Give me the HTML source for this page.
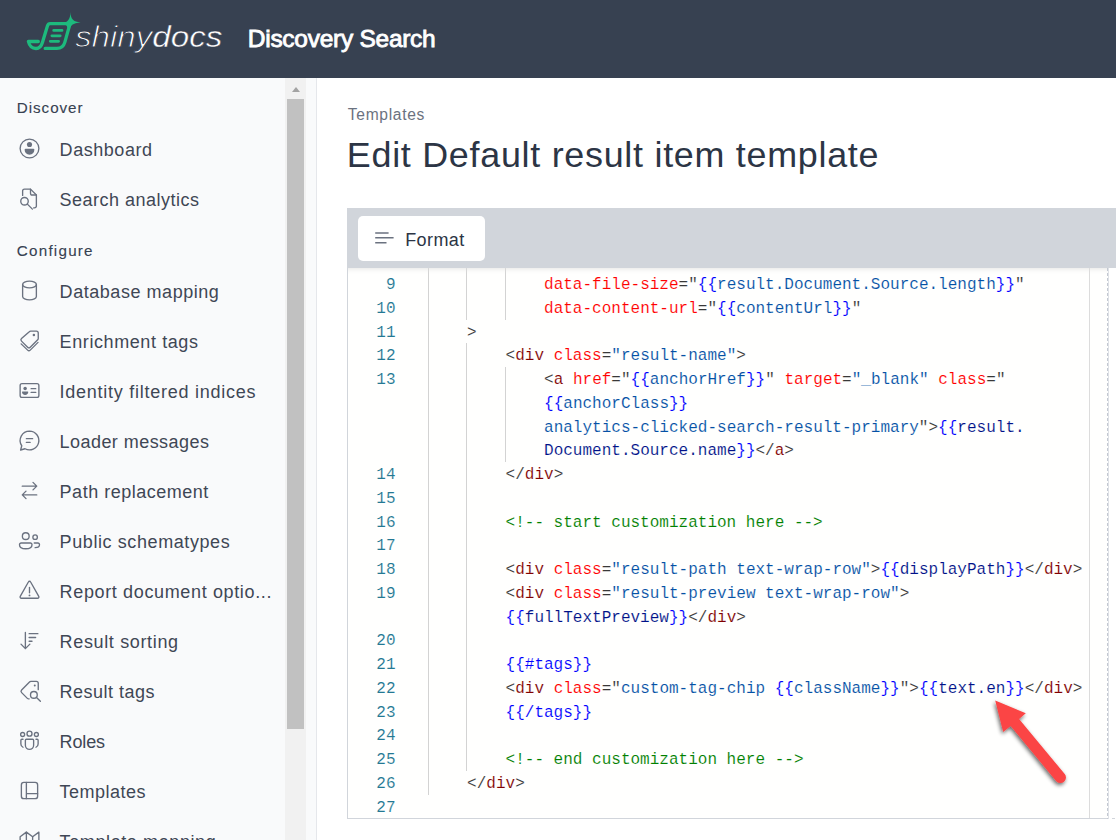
<!DOCTYPE html>
<html lang="en">
<head>
<meta charset="utf-8">
<title>Discovery Search</title>
<style>
*{box-sizing:border-box;margin:0;padding:0}
html,body{width:1116px;height:840px;overflow:hidden;background:#fff;font-family:"Liberation Sans",sans-serif}
body{position:relative}
#header{position:absolute;left:0;top:0;width:1116px;height:77.5px;background:#374151}
#logo{position:absolute;left:0;top:0;width:240px;height:77px}
#brand{position:absolute;left:247.8px;top:24.5px;font-size:24.5px;line-height:28px;letter-spacing:-.27px;-webkit-text-stroke:.85px #fff;color:#fff;white-space:nowrap}
#sidebar{position:absolute;left:0;top:77.5px;width:317px;height:763px;background:#f9fafb;border-right:1px solid #e5e7eb;overflow:hidden}
.sect{position:absolute;left:16.8px;font-size:15.2px;line-height:20px;color:#374151;letter-spacing:.95px;-webkit-text-stroke:.12px #374151;white-space:nowrap}
.nav{position:absolute;left:59.6px;font-size:18px;line-height:25px;color:#3f4755;letter-spacing:.67px;white-space:nowrap}
.ico{position:absolute;left:17px;width:25px;height:25px}
.ico svg{display:block;width:25px;height:25px;fill:none;stroke:#6b7280;stroke-width:1.08;stroke-linecap:round;stroke-linejoin:round}
.ico svg .f{fill:#6b7280;stroke:none}
#sbtrack{position:absolute;left:285px;top:0;width:21px;height:763px;background:#f1f1f1}
#sbthumb{position:absolute;left:2px;top:21.5px;width:17px;height:630px;background:#c1c1c1}
#sbarrow{position:absolute;left:6.5px;top:9.3px;width:0;height:0;border-left:4.5px solid transparent;border-right:4.5px solid transparent;border-bottom:5px solid #a3a3a3}
#main{position:absolute;left:317px;top:77.5px;width:799px;height:763px;background:#fff}
#crumb{position:absolute;left:347.8px;top:105.2px;font-size:15.6px;line-height:20px;color:#6b7280;letter-spacing:.68px;white-space:nowrap}
#title{position:absolute;left:346.8px;top:133.2px;font-size:35.9px;line-height:44px;color:#2c3545;letter-spacing:.72px;white-space:nowrap}
#toolbar{position:absolute;left:347px;top:208px;width:769px;height:60px;background:#d1d5db}
#fmt{position:absolute;left:11px;top:8px;width:127px;height:45px;background:#fff;border-radius:5px}
#fmt svg{position:absolute;left:17px;top:15.8px;fill:none;stroke:#6b7280;stroke-width:1.5}
#fmt span{position:absolute;left:47.2px;top:11.9px;font-size:18px;line-height:25px;color:#2c3545;letter-spacing:.4px;white-space:nowrap}
#editor{position:absolute;left:347px;top:268px;width:761px;height:551px;background:#fffffe;border-left:1px solid #d1d5db;border-bottom:1px solid #d1d5db;overflow:hidden;font-family:"Liberation Mono",monospace;font-size:16.03px}
#editor .shadow{position:absolute;left:0;top:0;width:100%;height:6px;box-shadow:#ddd 0 6px 6px -6px inset}
#editor .ruler{position:absolute;left:740.6px;top:0;width:1px;height:551px;background:#dcdcdc}
.ln{-webkit-text-stroke:.12px #fffffe;position:absolute;left:0;width:47.6px;margin-top:2px;text-align:right;color:#237893;height:23.75px;line-height:23.75px;white-space:pre}
.cl{-webkit-text-stroke:.12px #fffffe;position:absolute;margin-top:2px;height:23.75px;line-height:23.75px;white-space:pre;color:#383838}
.g{position:absolute;width:1px;background:#d3d3d3}
.t{color:#800000}.a{color:#f00}.v{color:#0451a5}.b{color:#00f}.n{color:#001188}.c{color:#008000}.d{color:#383838}
#dash{position:absolute;left:1107px;top:268px;width:1px;height:551px;background:repeating-linear-gradient(to bottom,#c3c8d1 0,#c3c8d1 3px,transparent 3px,transparent 5px)}
#dash2{position:absolute;left:1108px;top:268px;width:1px;height:551px;background:#dfe2e7}
#dash3{position:absolute;left:1112px;top:818px;width:3px;height:1px;background:#d1d5db}
#arrow{position:absolute;left:960px;top:670px;width:156px;height:150px;overflow:visible}

</style>
</head>
<body>
<div id="header">
<svg id="logo" viewBox="0 0 240 77">
<g fill="none" stroke="#1dba7d" stroke-width="3.3" stroke-linecap="round" stroke-linejoin="round">
<path d="M38.3 41.500H28.400C29.400 45.800 32.300 48.500 36 48.500C39.500 48.500 41.400 46.200 42.500 42.300L47.500 25.800C48 24.100 48.700 23.600 50.200 23.600H69"/>
<path d="M45.200 48.400H57C61.500 48.400 63.700 46.200 64.800 42.400L69.800 24.500"/>
</g>
<g stroke="#1dba7d" stroke-width="2.800" stroke-linecap="round">
<path d="M53.700 30.400h8.300M51.900 35.800h8.300M50.300 41.300h8.300"/>
</g>
<path fill="#1dba7d" d="M70.500 12c.2 7 2.600 9.700 10.200 10.400c-7.800.4-10.700 3-11.700 8.600l-2.500-5.500l-4.500-2.300c5.800-.6 8.300-4 8.500-11.200z"/>
<g font-family="Liberation Sans, sans-serif" font-style="italic" font-size="29.600" fill="#fff" stroke="#374151">
<text x="75" y="47.100" stroke-width="0.950" textLength="77.300" lengthAdjust="spacingAndGlyphs">shiny</text>
<text x="152.300" y="47.100" stroke-width="0.450" textLength="70" lengthAdjust="spacingAndGlyphs">docs</text>
</g>
</svg>

<div id="brand">Discovery Search</div>
</div>
<div id="sidebar">
<div class="sect" style="top:20.90px;letter-spacing:0.95px">Discover</div>
<div class="sect" style="top:163.40px;letter-spacing:1.24px">Configure</div>
<div class="ico" style="top:58.30px"><svg viewBox="0 0 20 20"><circle cx="10" cy="10" r="7.500"/><circle class="f" cx="10" cy="6.800" r="2.050"/><path class="f" d="M6.900 10.200h6.200a.8.800 0 0 1 .8.800c0 2.400-1.600 3.900-3.900 3.900s-3.900-1.500-3.900-3.900a.8.800 0 0 1 .8-.8z"/></svg></div>
<div class="nav" style="top:60.50px;letter-spacing:0.550px">Dashboard</div>
<div class="ico" style="top:108.30px"><svg viewBox="0 0 20 20"><path d="M4.500 7.500v-3.500a1.500 1.500 0 0 1 1.500-1.500h4.800l4.700 4.700v8.800a1.500 1.500 0 0 1-1.500 1.500h-.7"/><path d="M10.800 2.500v3.200a1.500 1.500 0 0 0 1.500 1.500h3.200"/><circle cx="6" cy="12.200" r="3"/><path d="M8.300 14.500l4 4"/></svg></div>
<div class="nav" style="top:110.50px;letter-spacing:0.489px">Search analytics</div>
<div class="ico" style="top:200.30px"><svg viewBox="0 0 20 20"><ellipse cx="10" cy="5.200" rx="5.500" ry="2.700"/><path d="M4.500 5.200v9.600c0 1.500 2.500 2.700 5.500 2.700s5.500-1.200 5.500-2.700v-9.600"/></svg></div>
<div class="nav" style="top:202.50px;letter-spacing:0.544px">Database mapping</div>
<div class="ico" style="top:250.30px"><svg viewBox="0 0 20 20"><path d="M10.900 2.500H15.500A1.500 1.500 0 0 1 17 4V8.400A1.500 1.500 0 0 1 16.550 9.460L10.600 15.400A1.500 1.500 0 0 1 8.500 15.400L3.600 10.500A1.500 1.500 0 0 1 3.600 8.400L9.850 2.940A1.500 1.500 0 0 1 10.900 2.500Z"/><circle class="f" cx="13.500" cy="5.600" r="1"/><path d="M3.300 12.700L8.500 17.700A1.500 1.500 0 0 0 10.600 17.700L16.800 11.500"/></svg></div>
<div class="nav" style="top:252.50px;letter-spacing:0.593px">Enrichment tags</div>
<div class="ico" style="top:300.30px"><svg viewBox="0 0 20 20"><rect x="2.500" y="4.500" width="15" height="11" rx="1.500"/><circle class="f" cx="6.500" cy="8.400" r="1.400"/><path class="f" d="M4.400 10.800h4.200c.3 0 .4.200.4.400c0 1.400-1 2.300-2.500 2.300s-2.500-.9-2.500-2.300c0-.2.100-.4.400-.4z"/><path d="M11.300 8.500h3.700M11.300 11.500h3.700"/></svg></div>
<div class="nav" style="top:302.50px;letter-spacing:0.745px">Identity filtered indices</div>
<div class="ico" style="top:350.30px"><svg viewBox="0 0 20 20"><path d="M10 2.500a7.500 7.500 0 1 1-3.600 14.100l-3.500 1 .9-3.400a7.500 7.500 0 0 1 6.200-11.700z"/><path d="M7.500 8.500h5M7.500 11.500h3"/></svg></div>
<div class="nav" style="top:352.50px;letter-spacing:0.443px">Loader messages</div>
<div class="ico" style="top:400.30px"><svg viewBox="0 0 20 20"><path d="M4.200 6.500h11.500M12.800 3.500l3 3l-3 3"/><path d="M15.800 13.500h-11.500M7.200 10.500l-3 3l3 3"/></svg></div>
<div class="nav" style="top:402.50px;letter-spacing:0.509px">Path replacement</div>
<div class="ico" style="top:450.30px"><svg viewBox="0 0 20 20"><circle cx="7" cy="6.500" r="2.700"/><path d="M3.300 12h7.400a1.300 1.300 0 0 1 1.300 1.300c0 2.100-2 3.300-5 3.300s-5-1.200-5-3.300a1.300 1.300 0 0 1 1.300-1.300z"/><circle cx="14.500" cy="7.300" r="1.800"/><path d="M13.800 12h2.900a1.300 1.300 0 0 1 1.300 1.300c0 1.400-1.200 2.300-3.500 2.400"/></svg></div>
<div class="nav" style="top:452.50px;letter-spacing:0.591px">Public schematypes</div>
<div class="ico" style="top:500.30px"><svg viewBox="0 0 20 20"><path d="M9.100 3.200a1 1 0 0 1 1.800 0l6.500 11.500a1 1 0 0 1-.9 1.500h-13a1 1 0 0 1-.9-1.500z"/><path d="M10 7.500v4.300"/><circle class="f" cx="10" cy="13.900" r="0.750"/></svg></div>
<div class="nav" style="top:502.50px;letter-spacing:0.641px">Report document optio...</div>
<div class="ico" style="top:550.30px"><svg viewBox="0 0 20 20"><path d="M6.700 3.500v13M3.200 12.900l3.500 3.600l3.600-3.600"/><path d="M9.700 4.500h7M9.700 7.600h5.200M9.700 10.600h2.300"/></svg></div>
<div class="nav" style="top:552.50px;letter-spacing:0.649px">Result sorting</div>
<div class="ico" style="top:600.30px"><svg viewBox="0 0 20 20"><path d="M17 9.300V4.200a1.500 1.500 0 0 0-1.500-1.500h-4.400a1.500 1.500 0 0 0-1.100.5l-6.300 6.400a1.500 1.500 0 0 0 0 2.100l4.600 4.600a1.500 1.500 0 0 0 1.400.4"/><circle class="f" cx="14.200" cy="6" r="0.800"/><circle cx="13.500" cy="13.500" r="2.700"/><path d="M15.400 15.400l3.300 3.200"/></svg></div>
<div class="nav" style="top:602.50px;letter-spacing:0.480px">Result tags</div>
<div class="ico" style="top:650.30px"><svg viewBox="0 0 20 20"><circle cx="10" cy="4.500" r="2"/><circle cx="4.500" cy="5.200" r="1.600"/><circle cx="15.500" cy="5.200" r="1.600"/><path d="M6.700 9.800a.8.800 0 0 1 .8-.8h5a.8.800 0 0 1 .8.800v4a3.300 3.300 0 0 1-6.600 0z"/><path d="M4.800 9h-.9a.8.800 0 0 0-.8.800v3a2.800 2.800 0 0 0 1.700 2.600"/><path d="M15.200 9h.9a.8.800 0 0 1 .8.800v3a2.800 2.800 0 0 1-1.700 2.600"/></svg></div>
<div class="nav" style="top:652.50px;letter-spacing:-0.150px">Roles</div>
<div class="ico" style="top:700.30px"><svg viewBox="0 0 20 20"><rect x="3.500" y="3.500" width="13" height="13" rx="2"/><path d="M7.500 3.500v13M7.500 12.500h9"/></svg></div>
<div class="nav" style="top:702.50px;letter-spacing:0.486px">Templates</div>
<div class="ico" style="top:750.30px"><svg viewBox="0 0 20 20"><path d="M2.500 7l5-3.700l5 3.700l5-3.700v11l-5 3.700l-5-3.700l-5 3.700z"/><path d="M7.500 3.300v11M12.500 7v11"/></svg></div>
<div class="nav" style="top:752.50px;letter-spacing:0.604px">Template mapping</div>
<div id="sbtrack"><div id="sbarrow"></div><div id="sbthumb"></div></div>
</div>
<div id="main"></div>
<div id="crumb">Templates</div>
<div id="title">Edit Default result item template</div>
<div id="toolbar"><div id="fmt"><svg viewBox="0 0 20 12" width="20" height="12"><path d="M0.2 1h13.4M0.2 5.7h18.4M0.2 10.7h11.3"/></svg><span>Format</span></div></div>
<div id="editor">
<div class="g" style="left:80.00px;top:-19.55px;height:546.25px"></div>
<div class="g" style="left:118.48px;top:-19.55px;height:71.25px"></div>
<div class="g" style="left:118.48px;top:75.45px;height:427.50px"></div>
<div class="g" style="left:156.96px;top:-19.55px;height:71.25px"></div>
<div class="g" style="left:156.96px;top:99.20px;height:95.00px"></div>
<div class="ln" style="top:4.20px">9</div>
<div class="cl" style="top:4.20px;left:196.04px"><span class="a">data-file-size</span><span class="d">="</span><span class="b">{{</span><span class="v">result.Document.Source.length</span><span class="b">}}</span><span class="d">"</span></div>
<div class="ln" style="top:27.95px">10</div>
<div class="cl" style="top:27.95px;left:196.04px"><span class="a">data-content-url</span><span class="d">="</span><span class="b">{{</span><span class="v">contentUrl</span><span class="b">}}</span><span class="d">"</span></div>
<div class="ln" style="top:51.70px">11</div>
<div class="cl" style="top:51.70px;left:119.08px"><span class="d">&gt;</span></div>
<div class="ln" style="top:75.45px">12</div>
<div class="cl" style="top:75.45px;left:157.56px"><span class="d">&lt;</span><span class="t">div</span> <span class="a">class</span><span class="d">=</span><span class="v">"result-name"</span><span class="d">&gt;</span></div>
<div class="ln" style="top:99.20px">13</div>
<div class="cl" style="top:99.20px;left:196.04px"><span class="d">&lt;</span><span class="t">a</span> <span class="a">href</span><span class="d">="</span><span class="b">{{</span><span class="v">anchorHref</span><span class="b">}}</span><span class="d">"</span> <span class="a">target</span><span class="d">=</span><span class="v">"_blank"</span> <span class="a">class</span><span class="d">="</span></div>
<div class="cl" style="top:122.95px;left:196.04px"><span class="b">{{</span><span class="v">anchorClass</span><span class="b">}}</span></div>
<div class="cl" style="top:146.70px;left:196.04px"><span class="v">analytics-clicked-search-result-primary</span><span class="d">"&gt;</span><span class="b">{{</span><span class="n">result.</span></div>
<div class="cl" style="top:170.45px;left:196.04px"><span class="n">Document.Source.name</span><span class="b">}}</span><span class="d">&lt;/</span><span class="t">a</span><span class="d">&gt;</span></div>
<div class="ln" style="top:194.20px">14</div>
<div class="cl" style="top:194.20px;left:157.56px"><span class="d">&lt;/</span><span class="t">div</span><span class="d">&gt;</span></div>
<div class="ln" style="top:217.95px">15</div>
<div class="ln" style="top:241.70px">16</div>
<div class="cl" style="top:241.70px;left:157.56px"><span class="c">&lt;!-- start customization here --&gt;</span></div>
<div class="ln" style="top:265.45px">17</div>
<div class="ln" style="top:289.20px">18</div>
<div class="cl" style="top:289.20px;left:157.56px"><span class="d">&lt;</span><span class="t">div</span> <span class="a">class</span><span class="d">=</span><span class="v">"result-path text-wrap-row"</span><span class="d">&gt;</span><span class="b">{{</span><span class="n">displayPath</span><span class="b">}}</span><span class="d">&lt;/</span><span class="t">div</span><span class="d">&gt;</span></div>
<div class="ln" style="top:312.95px">19</div>
<div class="cl" style="top:312.95px;left:157.56px"><span class="d">&lt;</span><span class="t">div</span> <span class="a">class</span><span class="d">=</span><span class="v">"result-preview text-wrap-row"</span><span class="d">&gt;</span></div>
<div class="cl" style="top:336.70px;left:157.56px"><span class="b">{{</span><span class="n">fullTextPreview</span><span class="b">}}</span><span class="d">&lt;/</span><span class="t">div</span><span class="d">&gt;</span></div>
<div class="ln" style="top:360.45px">20</div>
<div class="ln" style="top:384.20px">21</div>
<div class="cl" style="top:384.20px;left:157.56px"><span class="b">{{#tags}}</span></div>
<div class="ln" style="top:407.95px">22</div>
<div class="cl" style="top:407.95px;left:157.56px"><span class="d">&lt;</span><span class="t">div</span> <span class="a">class</span><span class="d">="</span><span class="v">custom-tag-chip </span><span class="b">{{</span><span class="v">className</span><span class="b">}}</span><span class="d">"&gt;</span><span class="b">{{</span><span class="n">text.en</span><span class="b">}}</span><span class="d">&lt;/</span><span class="t">div</span><span class="d">&gt;</span></div>
<div class="ln" style="top:431.70px">23</div>
<div class="cl" style="top:431.70px;left:157.56px"><span class="b">{{/tags}}</span></div>
<div class="ln" style="top:455.45px">24</div>
<div class="ln" style="top:479.20px">25</div>
<div class="cl" style="top:479.20px;left:157.56px"><span class="c">&lt;!-- end customization here --&gt;</span></div>
<div class="ln" style="top:502.95px">26</div>
<div class="cl" style="top:502.95px;left:119.08px"><span class="d">&lt;/</span><span class="t">div</span><span class="d">&gt;</span></div>
<div class="ln" style="top:526.70px">27</div>
<div class="ruler"></div>
<div class="shadow"></div>
</div>
<div id="dash"></div>
<div id="dash2"></div>
<div id="dash3"></div>
<svg id="arrow" viewBox="0 0 156 150">
<defs><filter id="ds" x="-30%" y="-30%" width="160%" height="160%"><feGaussianBlur in="SourceAlpha" stdDeviation="2.200"/><feOffset dx="-1.500" dy="1.800"/><feComponentTransfer><feFuncA type="linear" slope="0.620"/></feComponentTransfer><feMerge><feMergeNode/><feMergeNode in="SourceGraphic"/></feMerge></filter></defs>
<g filter="url(#ds)">
<path d="M35.200 30.500L65.800 43.200L59.050 48.900L104.700 104.050A5.500 5.500 0 0 1 96.300 111.150L50.650 56L43.200 61.900Z" fill="#fb4444"/>
</g>
</svg>

</body>
</html>
